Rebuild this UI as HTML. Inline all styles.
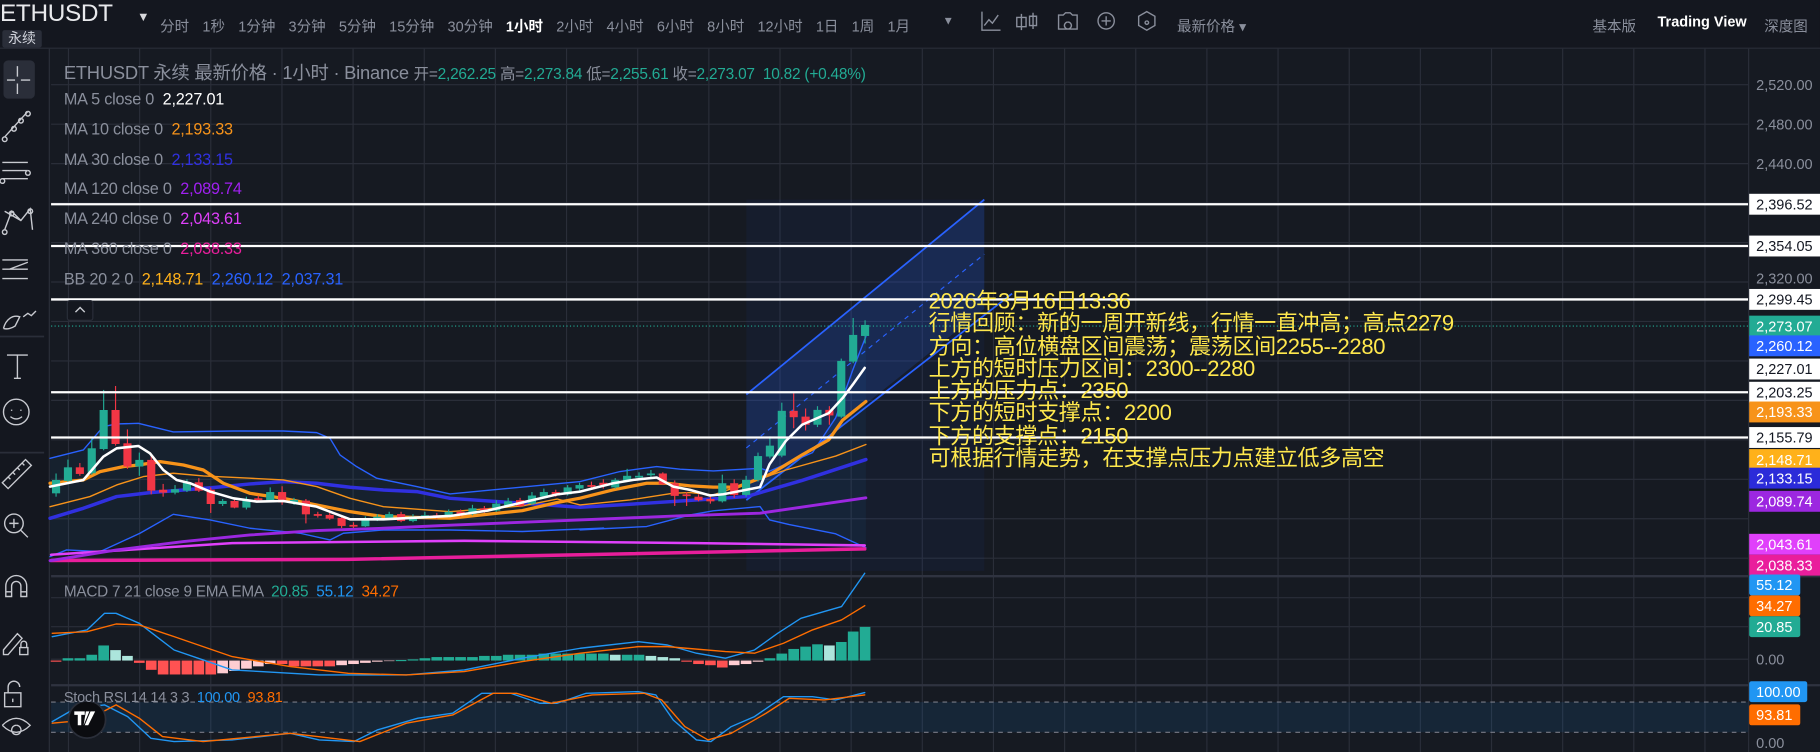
<!DOCTYPE html>
<html><head><meta charset="utf-8">
<style>
html,body{margin:0;padding:0;background:#161a22;overflow:hidden;width:1820px;height:752px}
#w{position:absolute;left:0;top:0;width:1568px;height:648px;transform:scale(1.16071,1.16049);transform-origin:0 0;background:#161a22;font-family:"Liberation Sans","Noto Sans CJK SC",sans-serif;color:#8a8f9c}
.t{position:absolute;white-space:nowrap}
svg{position:absolute;left:0;top:0}
.ma{font-size:14px;left:55px;position:absolute;white-space:nowrap;letter-spacing:-0.2px}
</style></head><body><div id="w">
<svg id="s" width="1568" height="648" viewBox="0 0 1568 648"></svg>
<div class="t" style="left:0;top:0;font-size:21px;color:#e8e9ec;font-weight:500;letter-spacing:-0.3px">ETHUSDT</div>
<div class="t" style="left:118px;top:9px;font-size:11px;color:#d8d9dc">▼</div>
<div class="t" style="left:2px;top:26px;width:34px;height:15px;background:#2a2e39;border-radius:2px;font-size:12px;color:#d1d4dc;text-align:center;line-height:15px">永续</div>
<div class="t" style="left:138px;top:12px;font-size:12.5px;color:#8a8f9c;word-spacing:0">
<span style="margin-right:11.4px">分时</span><span style="margin-right:11.4px">1秒</span><span style="margin-right:11.4px">1分钟</span><span style="margin-right:11.4px">3分钟</span><span style="margin-right:11.4px">5分钟</span><span style="margin-right:11.4px">15分钟</span><span style="margin-right:11.4px">30分钟</span><span style="margin-right:11.4px;color:#fff;font-weight:bold">1小时</span><span style="margin-right:11.4px">2小时</span><span style="margin-right:11.4px">4小时</span><span style="margin-right:11.4px">6小时</span><span style="margin-right:11.4px">8小时</span><span style="margin-right:11.4px">12小时</span><span style="margin-right:11.4px">1日</span><span style="margin-right:11.4px">1周</span><span>1月</span></div>
<div class="t" style="left:812px;top:13px;font-size:10px;color:#8a8f9c">▼</div>
<div class="t" style="left:1014px;top:12px;font-size:12.5px;color:#8a8f9c">最新价格 ▾</div>
<div class="t" style="left:1372px;top:12px;font-size:12.5px;color:#8a8f9c">基本版</div>
<div class="t" style="left:1428px;top:12px;font-size:12.5px;color:#fff;font-weight:bold">Trading View</div>
<div class="t" style="left:1520px;top:12px;font-size:12.5px;color:#8a8f9c">深度图</div>

<div class="t" style="left:55px;top:50px;font-size:15.8px;color:#8a8f9c;letter-spacing:-0.2px">ETHUSDT 永续 最新价格 · 1小时 · Binance <span style="font-size:13.3px">开=<span style="color:#22ab94">2,262.25</span> 高=<span style="color:#22ab94">2,273.84</span> 低=<span style="color:#22ab94">2,255.61</span> 收=<span style="color:#22ab94">2,273.07</span> &nbsp;<span style="color:#22ab94">10.82 (+0.48%)</span></span></div>
<div class="ma" style="top:77px">MA 5 close 0 &nbsp;<span style="color:#fff">2,227.01</span></div>
<div class="ma" style="top:103px">MA 10 close 0 &nbsp;<span style="color:#f7931a">2,193.33</span></div>
<div class="ma" style="top:129px">MA 30 close 0 &nbsp;<span style="color:#3030e0">2,133.15</span></div>
<div class="ma" style="top:154px">MA 120 close 0 &nbsp;<span style="color:#a020f0">2,089.74</span></div>
<div class="ma" style="top:180px">MA 240 close 0 &nbsp;<span style="color:#e040fb">2,043.61</span></div>
<div class="ma" style="top:206px">MA 360 close 0 &nbsp;<span style="color:#e91e9c">2,038.33</span></div>
<div class="ma" style="top:232px">BB 20 2 0 &nbsp;<span style="color:#ffb11a">2,148.71</span>&nbsp; <span style="color:#2962ff">2,260.12</span>&nbsp; <span style="color:#2962ff">2,037.31</span></div>
<div class="ma" style="top:502px;font-size:13.2px">MACD 7 21 close 9 EMA EMA &nbsp;<span style="color:#22ab94">20.85</span>&nbsp; <span style="color:#2196f3">55.12</span>&nbsp; <span style="color:#ff6d00">34.27</span></div>
<div class="ma" style="top:594px;font-size:12.5px">Stoch RSI 14 14 3 3 &nbsp;<span style="color:#2196f3">100.00</span>&nbsp; <span style="color:#ff6d00">93.81</span></div>

<div class="t" style="left:800px;top:251px;font-size:19px;line-height:19.3px;color:#ffe84d;letter-spacing:-0.3px;font-family:'Liberation Sans','Noto Sans CJK SC',sans-serif">2026年3月16日13:36<br>行情回顾：新的一周开新线，行情一直冲高；高点2279<br>方向：高位横盘区间震荡；震荡区间2255--2280<br>上方的短时压力区间：2300--2280<br>上方的压力点：2350<br>下方的短时支撑点：2200<br>下方的支撑点：2150<br>可根据行情走势，在支撑点压力点建立低多高空</div>
</div>
<script>
var s=document.getElementById('s'),h='';
function L(x1,y1,x2,y2,c,w,d){h+='<line x1="'+x1+'" y1="'+y1+'" x2="'+x2+'" y2="'+y2+'" stroke="'+c+'" stroke-width="'+(w||1)+'"'+(d?' stroke-dasharray="'+d+'"':'')+'/>';}
function P(pts,c,w,op){h+='<polyline fill="none" stroke="'+c+'" stroke-width="'+w+'" stroke-linejoin="round" stroke-linecap="round"'+(op?' opacity="'+op+'"':'')+' points="'+pts.map(function(p){return p[0].toFixed(1)+','+p[1].toFixed(1)}).join(' ')+'"/>';}
function R(x,y,w,hh,c,extra){h+='<rect x="'+x+'" y="'+y+'" width="'+w+'" height="'+hh+'" fill="'+c+'" '+(extra||'')+'/>';}
R(0,0,1568,42,'#14171f');R(0,42,42,606,'#14171f');
L(0,41.5,1568,41.5,'#2a2e39',1);L(42.5,42,42.5,648,'#2a2e39',1);
for(var x=59;x<1506;x+=61.3)L(x,42,x,648,'#2a2e39',1);
for(var y=73;y<497;y+=34)L(44,y,1506,y,'#2a2e39',1);
[515,540,568].forEach(function(y){L(44,y,1506,y,'#2a2e39',1)});
L(44,496.5,1568,496.5,'#2f3340',2);L(44,590.5,1568,590.5,'#2f3340',2);
L(1506.5,42,1506.5,648,'#2a2e39',1);
h+='<rect x="3" y="52" width="27" height="33" rx="4" fill="#2a2e39"/>';
h+='<g stroke="#c8cad0" fill="none" stroke-width="1.2">';
h+='<path d="M15 57v9M15 72v9M6 69h7M18 69h8"/>';
h+='<path d="M4 118l20-22M4 118a2 2 0 1 0 0.1 0M12 109a2 2 0 1 0 .1 0M18 102a2 2 0 1 0 .1 0M24 96a2 2 0 1 0 .1 0"/>';
h+='<path d="M2 140h22M2 147h22M2 154h22M24 147a2 2 0 1 0 .1 0M2 154a2 2 0 1 0 .1 0"/>';
h+='<path d="M4 198l6-16 8 8 8-10 2 18M4 182l14 8M4 198a2 2 0 1 0 .1 0M10 182a2 2 0 1 0 .1 0M26 180a2 2 0 1 0 .1 0"/>';
h+='<path d="M2 224h22M2 232h22M2 240h22M8 232l16-6"/>';
h+='<path d="M3 283c2-8 8-12 14-10l-4 8c-3 2-7 3-10 2M20 273l4 -3 3 2 4-4"/>';
h+='<path d="M6 306h18M15 306v20M12 326h6"/>';
h+='<circle cx="14" cy="355" r="11"/><path d="M10 353v1M18 353v1M9 359q5 4 10 0"/>';
h+='<path d="M2 416l20-20 5 5-20 20zM7 411l2 2M11 407l2 2M15 403l2 2M19 399l2 2"/>';
h+='<circle cx="12" cy="451" r="8"/><path d="M8 451h8M12 447v8M18 457l6 6"/>';
h+='<path d="M5 514v-9a9 9 0 0 1 18 0v9h-5v-9a4 4 0 0 0 -8 0v9zM5 510h5M18 510h5"/>';
h+='<path d="M3 560l12-14 4 4-12 14-4 0zM17 558h7v6h-7zM18 558v-3a2.5 2.5 0 0 1 5 0v3"/>';
h+='<path d="M4 597h14v12h-14zM7 597v-5a5 5 0 0 1 10 0M11 602v3"/>';
h+='<path d="M2 625q12-12 24 0q-12 12-24 0M14 625a4 4 0 1 0 .1 0"/>';
h+='</g>';
L(0,290,38,290,'#2a2e39',1.5);L(0,390,38,390,'#2a2e39',1.5);
h+='<g stroke="#8a8f9c" fill="none" stroke-width="1.2"><path d="M846 10v16h16M848 22l4-5 3 3 5-7"/><path d="M880 12v14M876 15h8v8h-8zM890 11v14M887 14h6v8h-6z"/><path d="M912 13h4l2-2h4l2 2h4v12h-16zM920 19a3 3 0 1 0 .1 0"/><circle cx="953" cy="18" r="7"/><path d="M949 18h8M953 14v8"/><path d="M988 10l7 4v8l-7 4-7-4v-8zM988 18a1.5 1.5 0 1 0 .1 0"/></g>';
h+='<polygon points="643,340 848,172 848,266 643,431" fill="rgba(41,98,255,0.18)"/>';
h+='<rect x="643" y="172" width="205" height="320" fill="rgba(41,98,255,0.05)"/>';
L(643,340,848,172,'#2962ff',1.5);L(643,431,872,253,'#2962ff',1.5);L(643,386,848,219,'#2962ff',1,'4 4');
function z7(a){return a.map(function(p){return [43.08+0.2872*p[0],318.8+0.2872*p[1]]})}
function z9(a){return a.map(function(p){return [499.7+0.2872*p[0],344.6+0.2872*p[1]]})}
function z3(a){return a.map(function(p){return [p[0]*0.5,258.5+0.2872*p[1]]})}
var bbU=z7([[0,265],[100,240],[160,170],[200,162],[265,160],[370,186],[550,183],[700,183],[800,188],[840,205],[870,255],[920,290],[980,325],[1100,350],[1200,372]]).concat(z9([[0,245],[120,215],[230,200],[300,208],[400,213],[540,205]])).concat([[663,406],[700,390],[720,360],[735,318],[746,290]]);
var bbL=z7([[0,560],[50,540],[150,545],[270,490],[370,433],[480,450],[600,475],[750,490],[840,510],[880,490],[1000,480],[1200,480]]).concat([[450,458],[520,455]]).concat(z9([[0,390],[200,380],[330,345],[400,333],[540,320]])).concat([[663,448],[680,452],[720,460],[746,472]]);
h+='<polygon fill="rgba(33,150,243,0.06)" points="'+bbU.concat(bbL.slice().reverse()).map(function(p){return p[0].toFixed(1)+','+p[1].toFixed(1)}).join(' ')+'"/>';
P(bbU,'#2962ff',1.2);P(bbL,'#2962ff',1.2);
P([[44,483],[300,482],[500,478],[745,473]],'#e91e9c',3);
P([[44,478],[200,468],[400,466],[600,468],[745,470]],'#e040fb',2.2);
P(z7([[0,572],[200,540],[400,515],[600,495],[800,482],[1000,475],[1200,466]]).concat(z9([[0,360],[300,348],[540,340]])).concat([[746,429]]),'#9c27e0',2.5);
P(z7([[0,445],[100,415],[200,380],[300,368],[400,360],[500,352],[600,342],[700,335],[800,340],[900,352],[1000,360],[1100,365],[1200,385]]).concat(z9([[0,322],[200,310],[400,297],[500,290]])).concat([[691,414],[746,396]]),'#3030e0',3);
P(z7([[0,410],[120,380],[200,345],[280,320],[370,310],[460,318],[600,325],[700,330],[800,350],[900,385],[1000,410],[1200,425]]).concat([[450,436],[480,430]]).concat(z9([[0,315],[150,300],[280,280],[330,278],[400,285]])).concat([[677,405],[720,393],[746,383]]),'#f7931a',1.2);
P(z7([[0,340],[100,330],[150,305],[220,290],[265,285],[330,275],[400,285],[460,300],[520,340],[600,370],[700,385],[800,405],[900,425],[1000,440],[1200,445]]).concat([[450,440],[480,433]]).concat(z9([[0,295],[100,270],[200,250],[260,250],[330,258],[400,262],[470,262]])).concat([[663,409],[691,392],[714,379],[726,362],[746,346]]),'#f7931a',2.8);
var C=[[0,'G',413.6,425.1,408,428],[1,'G',402.7,414.4,396,416],[2,'R',402.7,408.4,399,410],[3,'G',386.3,407.8,378,409],[4,'G',353.3,386.9,336,388],[5,'R',353.3,382.6,332.6,384],[6,'R',382,402,370,404],[7,'G',396.3,402,390,410],[8,'R',396.3,422.8,393,426],[9,'R',422,424.5,417,428],[10,'G',421.6,424.5,418,426],[11,'G',415.6,422.8,413,424],[12,'R',415.6,422.8,412,424],[13,'R',422,434.3,420,442],[14,'G',431.7,434.3,430,436],[15,'R',431.7,437.4,429,438],[16,'G',430.8,437.4,428,439],[17,'R',429.4,431,427,433],[18,'G',424,431.7,420,432],[19,'R',424,433,419,435],[20,'G',430.8,433,429,435],[21,'R',431.4,443.2,430,451],[22,'R',443,444,441,446],[23,'R',443.7,446.9,442,448],[24,'R',446.3,453.2,444,455],[25,'R',452.3,453.5,450,455],[26,'G',446.9,453.5,445,454],[27,'G',445.2,448,443,449],[28,'G',443,446.3,441,447],[29,'R',443,449,441,450],[30,'G',445,449,443,450],[31,'G',444,446,441,447],[32,'R',444,446,442,447],
[33,'G',441,445,439,446],[34,'R',441,444,439,445],[35,'G',438,443,435,444],[36,'R',438,441,436,442],[37,'G',434,440,431,441],[38,'G',432,436,429,437],[39,'R',431,436,429,437],[40,'G',427,434,424,435],[41,'G',424,428,421,429],[42,'R',424,427,422,428],[43,'G',420,426,418,427],
[44,'G',418,421,416,423],[45,'R',418,419.5,415,422],[46,'R',416,418,413,421],[47,'G',413.5,420,412,421],[48,'G',410,414,404,415],[49,'G',410,411,407,413],[50,'G',408,409,405,411],[51,'R',408,417.3,407,418],[52,'R',416.4,427.3,414,436],[53,'R',426,427.5,424,436],[54,'R',428,431,426,432],[55,'R',430,432,428,434],[56,'G',416.4,432,409,433],[57,'R',416.4,426.5,413,429],[58,'G',413.5,426.5,410,428],[59,'G',393,413.5,390,415],[60,'G',384,393.4,376,395],[61,'G',354,392.6,347,394],[62,'R',354,359.5,338.8,369],[63,'R',359,366,352,371],[64,'G',353.2,366,350,368],[65,'R',353.2,358,350,366],[66,'G',311,359,309,360],[67,'G',288.6,311.6,274,313],[68,'G',280,289.5,276,296]];
C.forEach(function(c){var x=48.3+10.25*c[0],col=c[1]=='G'?'#22ab94':'#f23645';L(x,c[4],x,c[5],col,1);var hh=Math.max(1.5,c[3]-c[2]);R(x-3.5,c[2],7,hh,col);});
P(z7([[0,350],[100,330],[160,260],[200,235],[265,228],[300,250],[340,300],[380,330],[420,340],[480,365],[550,385],[620,395],[700,393],[800,410],[900,448],[1000,448],[1200,438]]).concat([[420,440],[480,426]]).concat(z9([[0,275],[100,250],[160,240],[230,233],[280,260],[330,270],[390,287],[430,283],[540,262]])).concat([[663,400],[677,380],[691,366],[714,356],[726,343],[735,331],[745,317]]),'#ffffff',2.2);
[176,212,258,338,377].forEach(function(y){L(44,y,1506,y,'#ffffff',2)});
L(44,281,1506,281,'#22ab94',1,'1 2');
h+='<rect x="58" y="259" width="22" height="17" rx="2" fill="#14171f" stroke="#2a2e39"/><path d="M65 269l4-4 4 4" stroke="#c8cad0" fill="none" stroke-width="1.2"/>';
var H=[-1,2,2,5,13,9,4,-2,-8,-12,-12,-12,-12,-12,-11,-9,-7,-5,-3,-3,-5,-5,-5,-5,-4,-3,-2,-1,-.5,.5,1,2,3,3,3,3,4,4,5,5,5,6,6,6,6,6,6,5,5,5,4,3,2,-1,-3,-4,-6,-4,-3,-1,2,6,10,12,14,13,16,25,29];
for(var i=0;i<H.length;i++){var v=H[i],p=i?H[i-1]:0,x=48.3+10.25*i-4.6,col;
 if(v>=0)col=v>=p?'#22ab94':'#acE5dc';else col=v<=p?'#ff5252':'#ffcdd2';
 if(v>=0)R(x,569.2-v,9.2,Math.max(v,1),col);else R(x,569.2,9.2,-v,col);}
P(z3([[90,1010],[150,990],[180,940],[200,940],[240,970],[270,1010],[300,1050],[350,1080],[400,1110],[450,1115],[550,1125],[700,1125],[800,1110],[900,1075],[1000,1045],[1100,1025],[1150,1035],[1200,1060],[1250,1075],[1300,1050],[1340,1000],[1380,955],[1420,935],[1450,920],[1490,820]]),'#2196f3',1.2);
P(z3([[90,1000],[150,995],[200,972],[240,975],[300,1010],[400,1070],[500,1100],[600,1120],[700,1125],[800,1115],[900,1085],[1000,1060],[1100,1040],[1150,1040],[1250,1055],[1300,1060],[1350,1030],[1400,990],[1450,960],[1490,917]]),'#ff6d00',1.2);
R(44,605,1462,26,'rgba(33,150,243,0.1)');
L(44,605,1506,605,'#787b86',1,'4 4');L(44,631,1506,631,'#787b86',1,'4 4');
P(z3([[90,1265],[130,1225],[180,1215],[220,1250],[260,1315],[300,1325],[400,1320],[500,1300],[550,1320],[610,1325],[650,1290],[720,1255],[780,1240],[830,1180],[880,1180],[930,1210],[960,1210],[1010,1180],[1100,1175],[1130,1185],[1160,1260],[1200,1320],[1225,1325],[1260,1280],[1300,1250],[1350,1190],[1400,1190],[1440,1200],[1490,1178]]),'#2196f3',1.2);
P(z3([[90,1270],[150,1260],[200,1215],[240,1255],[280,1310],[350,1325],[500,1300],[620,1325],[700,1270],[780,1245],[850,1180],[890,1180],[950,1210],[1020,1185],[1110,1180],[1140,1200],[1180,1280],[1220,1320],[1260,1300],[1320,1240],[1360,1195],[1420,1200],[1490,1185]]),'#ff6d00',1.2);
h+='<circle cx="75" cy="620" r="16" fill="#0b0c10" stroke="#2a2e39" stroke-width="1.5"/><path d="M64 613h9v3h-3v9h-3v-9h-3zM74 613h3l-5 12zM78 613h4l-6 12h-3z" fill="#fff"/>';
var A=[['2,520.00',73,null],['2,480.00',107,null],['2,440.00',141,null],['2,320.00',240,null],['2,396.52',176,'#fff'],['2,354.05',212,'#fff'],['2,299.45',258,'#fff'],['2,273.07',281,'#22ab94'],['2,260.12',298,'#2962ff'],['2,227.01',318,'#fff'],['2,203.25',338,'#fff'],['2,193.33',355,'#f7931a'],['2,155.79',377,'#fff'],['2,148.71',396,'#ffb11a'],['2,133.15',412,'#2b2bd9'],['2,089.74',432,'#9c27e0'],['2,043.61',469,'#e040fb'],['2,038.33',487,'#e91e9c'],['55.12',504,'#2196f3',1],['34.27',522,'#ff6d00',1],['20.85',540,'#22ab94',1],['0.00',568,null],['100.00',596,'#2196f3',1],['93.81',616,'#ff6d00',1],['0.00',640,null]];
A.forEach(function(a){var bg=a[2],tc=bg?(bg=='#fff'?'#131722':'#fff'):'#8a8f9c';var w=a[3]?(a[0].length>5?50:44):62;
 if(bg)h+='<rect x="1507" y="'+(a[1]-9)+'" width="'+w+'" height="18" rx="'+(a[3]?2:0)+'" fill="'+bg+'"/>';
 h+='<text x="1513" y="'+(a[1]+4.5)+'" font-size="12.5" fill="'+tc+'" font-family="Liberation Sans,sans-serif">'+a[0]+'</text>';});
s.innerHTML=h;
</script>
</body></html>
